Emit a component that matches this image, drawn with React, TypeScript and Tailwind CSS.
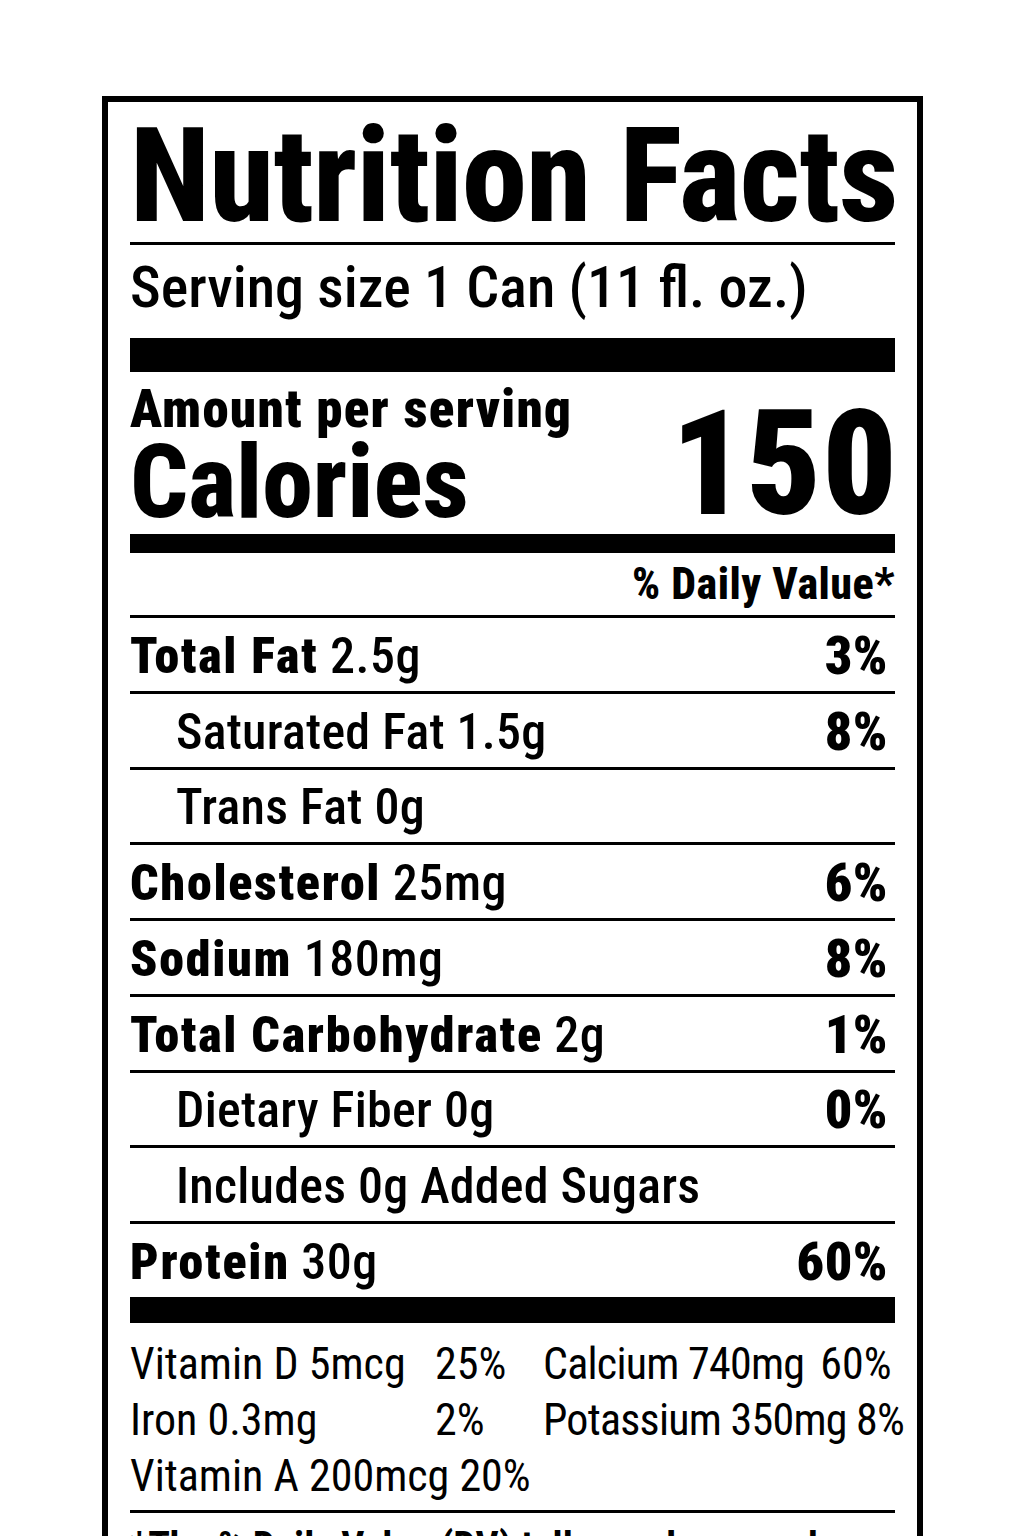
const rows = [
  { label: 'Total Fat', amount: '2.5g', dv: '3%', bold: true },
  { label: 'Saturated Fat', amount: '1.5g', dv: '8%', bold: false },
  { label: 'Trans Fat', amount: '0g', dv: '', bold: false },
  { label: 'Cholesterol', amount: '25mg', dv: '6%', bold: true },
  { label: 'Sodium', amount: '180mg', dv: '8%', bold: true },
  { label: 'Total Carbohydrate', amount: '2g', dv: '1%', bold: true },
  { label: 'Dietary Fiber', amount: '0g', dv: '0%', bold: false },
  { label: 'Includes 0g Added Sugars', amount: '', dv: '', bold: false },
  { label: 'Protein', amount: '30g', dv: '60%', bold: true },
];

export default function App() {
  return (
    <div className="min-h-screen bg-white text-black font-['Roboto_Condensed','Roboto','Liberation_Sans',sans-serif] pt-[96px] pl-[102px]">
      <div className="w-[821px] border-[6px] border-black px-[22px] pt-[8px]">
        {/* Title */}
        <h1 className="text-[131px] leading-[132px] font-extrabold tracking-[-0.75px] border-b-[3px] border-black whitespace-nowrap">
          Nutrition Facts
        </h1>

        {/* Serving size */}
        <div className="mt-[7px] text-[58px] leading-[70px] font-medium whitespace-nowrap">
          Serving size 1 Can (11 fl. oz.)
        </div>
        <div className="mt-[16px] h-[34px] bg-black" />

        {/* Calories */}
        <div className="pt-[13px] flex items-end justify-between">
          <div>
            <div className="text-[53px] leading-[48px] font-black tracking-[1.25px] whitespace-nowrap">Amount per serving</div>
            <div className="text-[102px] leading-[98px] font-extrabold">Calories</div>
          </div>
          <div className="text-[146px] leading-[132px] font-black tracking-[1px] -mr-[3px]">150</div>
        </div>
        <div className="mt-[3px] h-[19px] bg-black" />

        <div className="h-[62px] text-right text-[44px] leading-[62px] font-extrabold tracking-[0.5px]">% Daily Value*</div>

        {/* Nutrients */}
        {rows.map((r) => (
          <div
            key={r.label}
            className="h-[75.75px] border-t-[3px] border-black flex items-center justify-between pt-[3px] text-[50px] leading-none whitespace-nowrap"
          >
            <div className={r.bold ? '' : 'pl-[46px]'}>
              {r.bold ? (
                <>
                  <span className="font-black tracking-[1.75px]">{r.label}</span>{' '}
                  <span className="font-medium tracking-[0.5px]">{r.amount}</span>
                </>
              ) : (
                <span className="font-medium tracking-[0.25px]">
                  {r.label}
                  {r.amount ? ' ' + r.amount : ''}
                </span>
              )}
            </div>
            <div className="pr-[7px] text-[54px] font-black tracking-[0.5px]">{r.dv}</div>
          </div>
        ))}
        <div className="h-[26px] bg-black" />

        {/* Vitamins and minerals */}
        <div className="pt-[13px] grid grid-cols-[305px_108px_1fr] text-[44px] leading-[56px] whitespace-nowrap">
          <div>Vitamin D 5mcg</div>
          <div>25%</div>
          <div className="flex">
            <span className="tracking-[-0.75px]">Calcium 740mg</span>
            <span className="ml-[16px]">60%</span>
          </div>
          <div>Iron 0.3mg</div>
          <div>2%</div>
          <div className="tracking-[-0.75px]">Potassium 350mg 8%</div>
          <div className="col-span-3">Vitamin A 200mcg 20%</div>
        </div>
        <div className="mt-[6px] h-[3px] bg-black" />

        {/* Footnote */}
        <p className="mt-[10px] pb-6 text-[40px] leading-[48px] font-bold">
          *The % Daily Value (DV) tells you how much a nutrient in a serving of food contributes to a daily diet.
          2,000 calories a day is used for general nutrition advice.
        </p>
      </div>
    </div>
  );
}
